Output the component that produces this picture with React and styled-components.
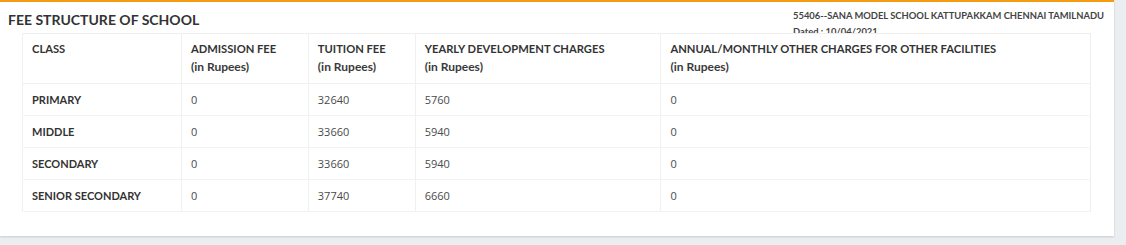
import React from 'react';
import styled, { createGlobalStyle } from 'styled-components';

const GlobalStyle = createGlobalStyle`
  html, body {
    margin: 0;
    padding: 0;
    background: #ebeef1;
  }
  body {
    font-family: Lato, "Open Sans", sans-serif;
    color: #333;
  }
`;

const Page = styled.div`
  width: 1126px;
  height: 245px;
  padding: 0 12px 8px 0;
  box-sizing: border-box;
`;

const Card = styled.div`
  position: relative;
  background: #fff;
  border-top: 2px solid #f39c12;
  box-shadow: 0 1px 2px rgba(0, 0, 0, 0.15);
  height: 236px;
  box-sizing: border-box;
  padding: 0 23px 0 22px;
`;

const Title = styled.h3`
  margin: 0 0 0 -14px;
  padding-top: 8px;
  height: 23px;
  font-family: Lato, sans-serif;
  font-weight: 700;
  font-size: 14px;
  line-height: 19px;
  color: #333;
`;

const SchoolInfo = styled.div`
  position: absolute;
  top: 6px;
  left: 793px;
  white-space: nowrap;
  font-family: Lato, sans-serif;
  font-weight: 700;
  font-size: 9.4px;
  line-height: 16px;
  color: #444;
  z-index: 0;
`;

const Table = styled.table`
  position: relative;
  z-index: 1;
  width: 1069px;
  border-collapse: collapse;
  background: #fff;
  border: 1px solid #eee;
`;

const Col = styled.col`
  width: ${p => p.w}px;
`;

const Th = styled.th`
  text-align: left;
  vertical-align: top;
  padding: 6px 9px 7px;
  font-family: Lato, sans-serif;
  font-weight: 700;
  font-size: 11.2px;
  line-height: 18px;
  color: #333;
  border-left: 1px solid #f0f0f0;
  border-bottom: 1px solid #f0f0f0;
`;

const Sub = styled.span`
  display: block;
  font-size: 12px;
  font-weight: 700;
  color: #3a3a3a;
`;

const Td = styled.td`
  padding: 0 9px;
  height: 32px;
  box-sizing: border-box;
  font-family: ${p => (p.label ? 'Lato, sans-serif' : '"Open Sans", sans-serif')};
  font-weight: ${p => (p.label ? 700 : 400)};
  font-size: 11px;
  color: ${p => (p.label ? '#333' : '#4a4a4a')};
  border-left: 1px solid #f0f0f0;
  border-bottom: 1px solid #f3f3f3;
`;

const columns = [
  { w: 159, title: 'CLASS' },
  { w: 127, title: 'ADMISSION FEE', sub: true },
  { w: 107, title: 'TUITION FEE', sub: true },
  { w: 246, title: 'YEARLY DEVELOPMENT CHARGES', sub: true },
  { w: 430, title: 'ANNUAL/MONTHLY OTHER CHARGES FOR OTHER FACILITIES', sub: true },
];

const rows = [
  ['PRIMARY', '0', '32640', '5760', '0'],
  ['MIDDLE', '0', '33660', '5940', '0'],
  ['SECONDARY', '0', '33660', '5940', '0'],
  ['SENIOR SECONDARY', '0', '37740', '6660', '0'],
];

const App = () => (
  <>
    <GlobalStyle />
    <Page>
      <Card>
        <Title>FEE STRUCTURE OF SCHOOL</Title>
        <SchoolInfo>
          <div>55406--SANA MODEL SCHOOL KATTUPAKKAM CHENNAI TAMILNADU</div>
          <div>Dated : 10/04/2021</div>
        </SchoolInfo>
        <Table>
          <colgroup>
            {columns.map(c => (
              <Col key={c.title} w={c.w} />
            ))}
          </colgroup>
          <thead>
            <tr>
              {columns.map(c => (
                <Th key={c.title}>
                  {c.title}
                  {c.sub && <Sub>(in Rupees)</Sub>}
                </Th>
              ))}
            </tr>
          </thead>
          <tbody>
            {rows.map(r => (
              <tr key={r[0]}>
                {r.map((v, i) => (
                  <Td key={i} label={i === 0}>
                    {v}
                  </Td>
                ))}
              </tr>
            ))}
          </tbody>
        </Table>
      </Card>
    </Page>
  </>
);

export default App;
